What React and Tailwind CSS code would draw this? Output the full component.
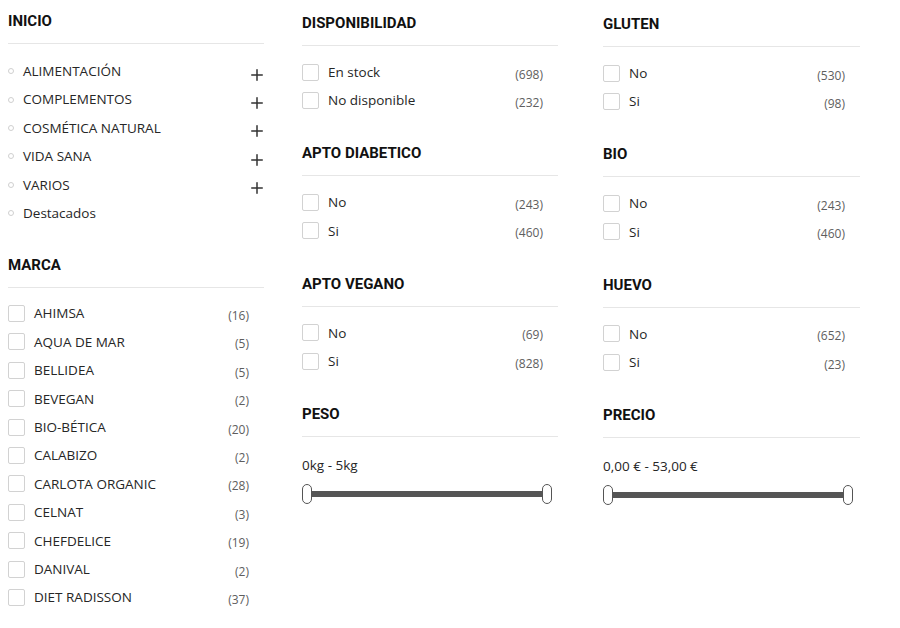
import { Plus } from "lucide-react";

const inicio = [
  { label: "ALIMENTACIÓN", plus: true },
  { label: "COMPLEMENTOS", plus: true },
  { label: "COSMÉTICA NATURAL", plus: true },
  { label: "VIDA SANA", plus: true },
  { label: "VARIOS", plus: true },
  { label: "Destacados", plus: false },
];

const marcas = [
  ["AHIMSA", 16],
  ["AQUA DE MAR", 5],
  ["BELLIDEA", 5],
  ["BEVEGAN", 2],
  ["BIO-BÉTICA", 20],
  ["CALABIZO", 2],
  ["CARLOTA ORGANIC", 28],
  ["CELNAT", 3],
  ["CHEFDELICE", 19],
  ["DANIVAL", 2],
  ["DIET RADISSON", 37],
];

const col2 = [
  { title: "DISPONIBILIDAD", items: [["En stock", 698], ["No disponible", 232]] },
  { title: "APTO DIABETICO", items: [["No", 243], ["Si", 460]] },
  { title: "APTO VEGANO", items: [["No", 69], ["Si", 828]] },
];

const col3 = [
  { title: "GLUTEN", items: [["No", 530], ["Si", 98]] },
  { title: "BIO", items: [["No", 243], ["Si", 460]] },
  { title: "HUEVO", items: [["No", 652], ["Si", 23]] },
];

function Heading({ children }) {
  return (
    <h3 className="font-['Roboto',sans-serif] font-bold text-[15px] leading-5 text-[#111] pb-3 border-b border-[#e6e6e6]">
      {children}
    </h3>
  );
}

function CheckRow({ label, count }) {
  return (
    <div className="flex items-center h-[28.4px]">
      <span className="w-[17px] h-[17px] shrink-0 border border-[#d2d2d2] rounded-[2px] bg-white" />
      <span className="ml-[9px] text-[13.5px] text-[#262626]">{label}</span>
      <span className="ml-auto mr-[15px] pt-[5px] text-[12px] text-[#5e5e5e]">({count})</span>
    </div>
  );
}

function Slider({ value }) {
  return (
    <div>
      <div className="mt-[18.5px] text-[13.5px] leading-5 text-[#262626]">{value}</div>
      <div className="mt-[9px] flex items-center w-[250px] h-5">
        <span className="w-[10px] h-5 shrink-0 rounded-[5px] border border-[#555] bg-white" />
        <span className="flex-1 h-[6px] bg-[#555]" />
        <span className="w-[10px] h-5 shrink-0 rounded-[5px] border border-[#555] bg-white" />
      </div>
    </div>
  );
}

function FilterColumn({ sections, slider, className }) {
  return (
    <div className={className}>
      {sections.map((s, i) => (
        <div key={s.title} className={i > 0 ? "mt-[28.5px]" : ""}>
          <Heading>{s.title}</Heading>
          <div className="mt-3">
            {s.items.map(([label, count]) => (
              <CheckRow key={label} label={label} count={count} />
            ))}
          </div>
        </div>
      ))}
      <div className="mt-[28.5px]">
        <Heading>{slider.title}</Heading>
        <Slider value={slider.value} />
      </div>
    </div>
  );
}

export default function App() {
  return (
    <div className="w-[900px] h-[628px] bg-white overflow-hidden font-['Open_Sans',sans-serif] flex pl-2">
      {/* INICIO + MARCA */}
      <div className="w-[256px] pt-[11px]">
        <Heading>INICIO</Heading>
        <ul className="mt-[13px]">
          {inicio.map((item) => (
            <li key={item.label} className="flex items-center h-[28.4px]">
              <span className="w-[6px] h-[6px] shrink-0 rounded-full border border-[#d0d0d0]" />
              <span className="ml-[9px] text-[13.5px] text-[#262626]">{item.label}</span>
              {item.plus && (
                <Plus className="ml-auto mt-[7px] -mr-[2px] text-[#333]" size={18} strokeWidth={2} />
              )}
            </li>
          ))}
        </ul>

        <div className="mt-[28px]">
          <Heading>MARCA</Heading>
          <div className="mt-[11px]">
            {marcas.map(([label, count]) => (
              <CheckRow key={label} label={label} count={count} />
            ))}
          </div>
        </div>
      </div>

      <FilterColumn
        className="w-[256px] ml-[38px] pt-[13px]"
        sections={col2}
        slider={{ title: "PESO", value: "0kg - 5kg" }}
      />

      <FilterColumn
        className="w-[257px] ml-[45px] pt-[14px]"
        sections={col3}
        slider={{ title: "PRECIO", value: "0,00 € - 53,00 €" }}
      />
    </div>
  );
}
